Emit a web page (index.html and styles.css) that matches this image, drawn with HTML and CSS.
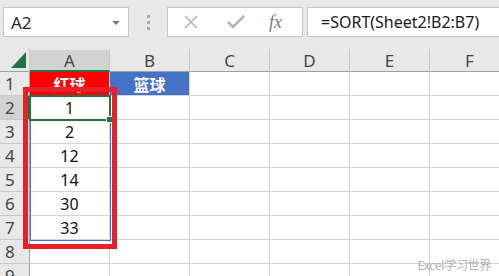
FILE: index.html
```html
<!DOCTYPE html>
<html lang="zh">
<head>
    <meta charset="UTF-8">
    <meta name="viewport" content="width=device-width, initial-scale=1.0">
    <title>SORT</title>
    <link rel="stylesheet" href="styles.css">
</head>
<body>
    <div class="formula-bar">
        <div class="name-box"><span>A2</span><span class="caret"></span></div>
        <div class="grip"><i></i><i></i><i></i></div>
        <div class="fx-box">
            <svg width="16" height="16" viewBox="0 0 16 16"><path d="M2 2 L14 14 M14 2 L2 14" stroke="#b4b4b4" stroke-width="1.6" fill="none"/></svg>
            <svg width="18" height="14" viewBox="0 0 18 14"><path d="M1 7 L6 12 L17 1" stroke="#b4b4b4" stroke-width="2.6" fill="none"/></svg>
            <span class="fx">fx</span>
        </div>
        <div class="formula">=SORT(Sheet2!B2:B7)</div>
    </div>

    <div class="sheet">
        <div class="grid">
            <div class="corner"><span class="tri"></span></div>
            <div class="col-head active">A</div>
            <div class="col-head">B</div>
            <div class="col-head">C</div>
            <div class="col-head">D</div>
            <div class="col-head">E</div>
            <div class="col-head">F</div>

            <div class="row-head">1</div>
            <div class="cell red">红球</div>
            <div class="cell blue">篮球</div>
            <div class="cell"></div><div class="cell"></div><div class="cell"></div><div class="cell"></div>

            <div class="row-head active">2</div>
            <div class="cell num">1</div>
            <div class="cell"></div><div class="cell"></div><div class="cell"></div><div class="cell"></div><div class="cell"></div>

            <div class="row-head">3</div>
            <div class="cell num">2</div>
            <div class="cell"></div><div class="cell"></div><div class="cell"></div><div class="cell"></div><div class="cell"></div>

            <div class="row-head">4</div>
            <div class="cell num">12</div>
            <div class="cell"></div><div class="cell"></div><div class="cell"></div><div class="cell"></div><div class="cell"></div>

            <div class="row-head">5</div>
            <div class="cell num">14</div>
            <div class="cell"></div><div class="cell"></div><div class="cell"></div><div class="cell"></div><div class="cell"></div>

            <div class="row-head">6</div>
            <div class="cell num">30</div>
            <div class="cell"></div><div class="cell"></div><div class="cell"></div><div class="cell"></div><div class="cell"></div>

            <div class="row-head">7</div>
            <div class="cell num">33</div>
            <div class="cell"></div><div class="cell"></div><div class="cell"></div><div class="cell"></div><div class="cell"></div>

            <div class="row-head">8</div>
            <div class="cell"></div><div class="cell"></div><div class="cell"></div><div class="cell"></div><div class="cell"></div><div class="cell"></div>

            <div class="row-head">9</div>
            <div class="cell"></div><div class="cell"></div><div class="cell"></div><div class="cell"></div><div class="cell"></div><div class="cell"></div>
        </div>

        <div class="spill"></div>
        <div class="selection"><span class="handle"></span></div>
        <div class="mark"></div>
        <div class="watermark">Excel学习世界</div>
    </div>
</body>
</html>
```

FILE: styles.css
```css
body {
	margin: 0;
	width: 499px;
	height: 276px;
	overflow: hidden;
	background: #e8e8e8;
	font-family: "Noto Sans", "Noto Sans CJK SC", sans-serif;
}

/* formula bar */

.formula-bar {
	display: flex;
	height: 48px;
	padding: 7px 0 11px 3px;
	box-sizing: border-box;
}

.name-box {
	width: 126px;
	background: #fff;
	border: 1px solid #c6c6c6;
	box-sizing: border-box;
	display: flex;
	align-items: center;
	justify-content: space-between;
	padding: 0 8px 0 7px;
	font-size: 17px;
	color: #1e2a3a;
}

.caret {
	width: 0;
	height: 0;
	border-left: 4px solid transparent;
	border-right: 4px solid transparent;
	border-top: 4px solid #7a7a7a;
	margin-top: 2px;
}

.grip {
	width: 38px;
	display: flex;
	flex-direction: column;
	align-items: center;
	justify-content: center;
	gap: 3px;
}

.grip i {
	width: 3px;
	height: 3px;
	background: #a8a8a8;
}

.fx-box {
	width: 136px;
	margin-right: 4px;
	background: #fff;
	border: 1px solid #c6c6c6;
	box-sizing: border-box;
	display: flex;
	align-items: center;
	padding-left: 15px;
	gap: 28px;
}

.fx-box svg {
	display: block;
}

.fx {
	font-family: "Liberation Serif", serif;
	font-style: italic;
	font-size: 18px;
	color: #7a7a7a;
	margin-left: -4px;
}

.formula {
	flex: 1;
	background: #fff;
	border: 1px solid #c6c6c6;
	border-right: none;
	box-sizing: border-box;
	display: flex;
	align-items: center;
	padding-left: 13px;
	font-size: 16px;
	color: #1a1a1a;
	white-space: nowrap;
}

/* sheet */

.sheet {
	position: relative;
	background: #fff;
}

.grid {
	display: grid;
	grid-template-columns: 30px repeat(6, 80px);
	grid-auto-rows: 24px;
}

.corner, .col-head, .row-head {
	background: #e8e8e8;
	color: #444;
	font-size: 17px;
	display: flex;
	align-items: center;
	justify-content: center;
	box-sizing: border-box;
}

.corner {
	position: relative;
	border-right: 1px solid #c8c8c8;
	border-bottom: 1px solid #a0a0a0;
}

.tri {
	position: absolute;
	right: 3px;
	bottom: 3px;
	width: 0;
	height: 0;
	border-left: 15px solid transparent;
	border-bottom: 16px solid #217346;
}

.col-head {
	border-right: 1px solid #c8c8c8;
	border-bottom: 1px solid #a0a0a0;
	border-top: 2px solid #e8e8e8;
}

.col-head.active {
	background: #d2d2d2;
	border-top-color: #e8e8e8;
	border-bottom: 2px solid #217346;
}

.row-head {
	border-right: 1px solid #a0a0a0;
	border-bottom: 1px solid #c8c8c8;
	justify-content: flex-start;
	padding-left: 5px;
}

.row-head.active {
	background: #d2d2d2;
	border-right: 2px solid #217346;
}

.cell {
	border-right: 1px solid #d4d4d4;
	border-bottom: 1px solid #d4d4d4;
	box-sizing: border-box;
	display: flex;
	align-items: center;
	justify-content: center;
	font-size: 16px;
	color: #111;
}

.cell.red {
	background: #ff0000;
	color: #fff;
	font-weight: bold;
	font-family: "Noto Sans CJK SC", sans-serif;
}

.cell.blue {
	background: #4472c4;
	color: #fff;
	font-weight: bold;
	font-family: "Noto Sans CJK SC", sans-serif;
}

/* overlays */

.spill {
	position: absolute;
	left: 30px;
	top: 48px;
	width: 81px;
	height: 145px;
	border: 1px solid #4472c4;
	box-sizing: border-box;
}

.selection {
	position: absolute;
	left: 29px;
	top: 47px;
	width: 82px;
	height: 26px;
	border: 2px solid #217346;
	box-sizing: border-box;
}

.handle {
	position: absolute;
	right: -4px;
	bottom: -4px;
	width: 5px;
	height: 5px;
	background: #217346;
	border: 1px solid #fff;
}

.mark {
	position: absolute;
	left: 23px;
	top: 39px;
	width: 94px;
	height: 162px;
	border: 5px solid #e8202a;
	box-sizing: border-box;
}

.watermark {
	position: absolute;
	right: 8px;
	top: 208px;
	font-size: 12px;
	color: #b0b0b0;
	font-family: "Noto Sans CJK SC", sans-serif;
	letter-spacing: -0.3px;
}
```
